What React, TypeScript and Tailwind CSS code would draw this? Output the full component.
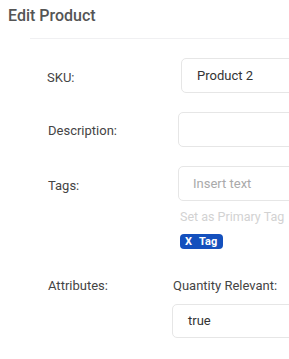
export default function App() {
  return (
    <div className="w-[289px] h-[359px] overflow-hidden bg-white font-['Roboto',sans-serif] text-[#444]">
      {/* header */}
      <div className="h-[38px] pl-2 pt-[6px]">
        <h1 className="text-[16px] font-medium text-[#555] leading-[20px]">Edit Product</h1>
      </div>
      <div className="ml-[30px] border-t border-[#f0f0f2]"></div>

      <div className="flex flex-col">
        {/* SKU */}
        <div className="flex items-center mt-[19px]">
          <div className="w-[181px] shrink-0 pl-[47px] text-[13px] pt-[4px]">SKU:</div>
          <div className="w-[140px] shrink-0 h-[35px] border border-[#e6e6e6] rounded-[5px] flex items-center pl-[15px] text-[13px] text-[#333]">
            Product 2
          </div>
        </div>

        {/* Description */}
        <div className="flex items-center mt-[19px]">
          <div className="w-[178px] shrink-0 pl-[48px] text-[13px] pt-[2px]">Description:</div>
          <div className="w-[140px] shrink-0 h-[35px] border border-[#e6e6e6] rounded-[5px]"></div>
        </div>

        {/* Tags */}
        <div className="flex items-start mt-[19px]">
          <div className="w-[178px] shrink-0 pl-[48px] text-[13px] pt-[10px]">Tags:</div>
          <div className="flex flex-col shrink-0">
            <div className="w-[140px] h-[35px] border border-[#e6e6e6] rounded-[5px] flex items-center pl-[14px] text-[13px] text-[#aaa]">
              Insert text
            </div>
            <div className="ml-[2px] mt-[8px] text-[12.5px] text-[#d2d2d2] leading-[16px]">Set as Primary Tag</div>
            <div className="ml-[2px] mt-[9px] w-[43px] h-[15px] rounded-[4px] bg-[#1450bd] text-white text-[11px] font-bold flex items-center pl-[5px] gap-[7px] leading-none">
              <span>X</span>
              <span>Tag</span>
            </div>
          </div>
        </div>

        {/* Attributes */}
        <div className="flex items-start mt-[29px]">
          <div className="w-[172px] shrink-0 pl-[48px] text-[13px] leading-[16px]">Attributes:</div>
          <div className="flex flex-col shrink-0">
            <div className="pl-[1px] text-[13px] leading-[16px]">Quantity Relevant:</div>
            <div className="mt-[10px] w-[140px] h-[34px] border border-[#e6e6e6] rounded-[5px] flex items-center pl-[15px] text-[13px] text-[#333]">
              true
            </div>
          </div>
        </div>
      </div>
    </div>
  );
}
